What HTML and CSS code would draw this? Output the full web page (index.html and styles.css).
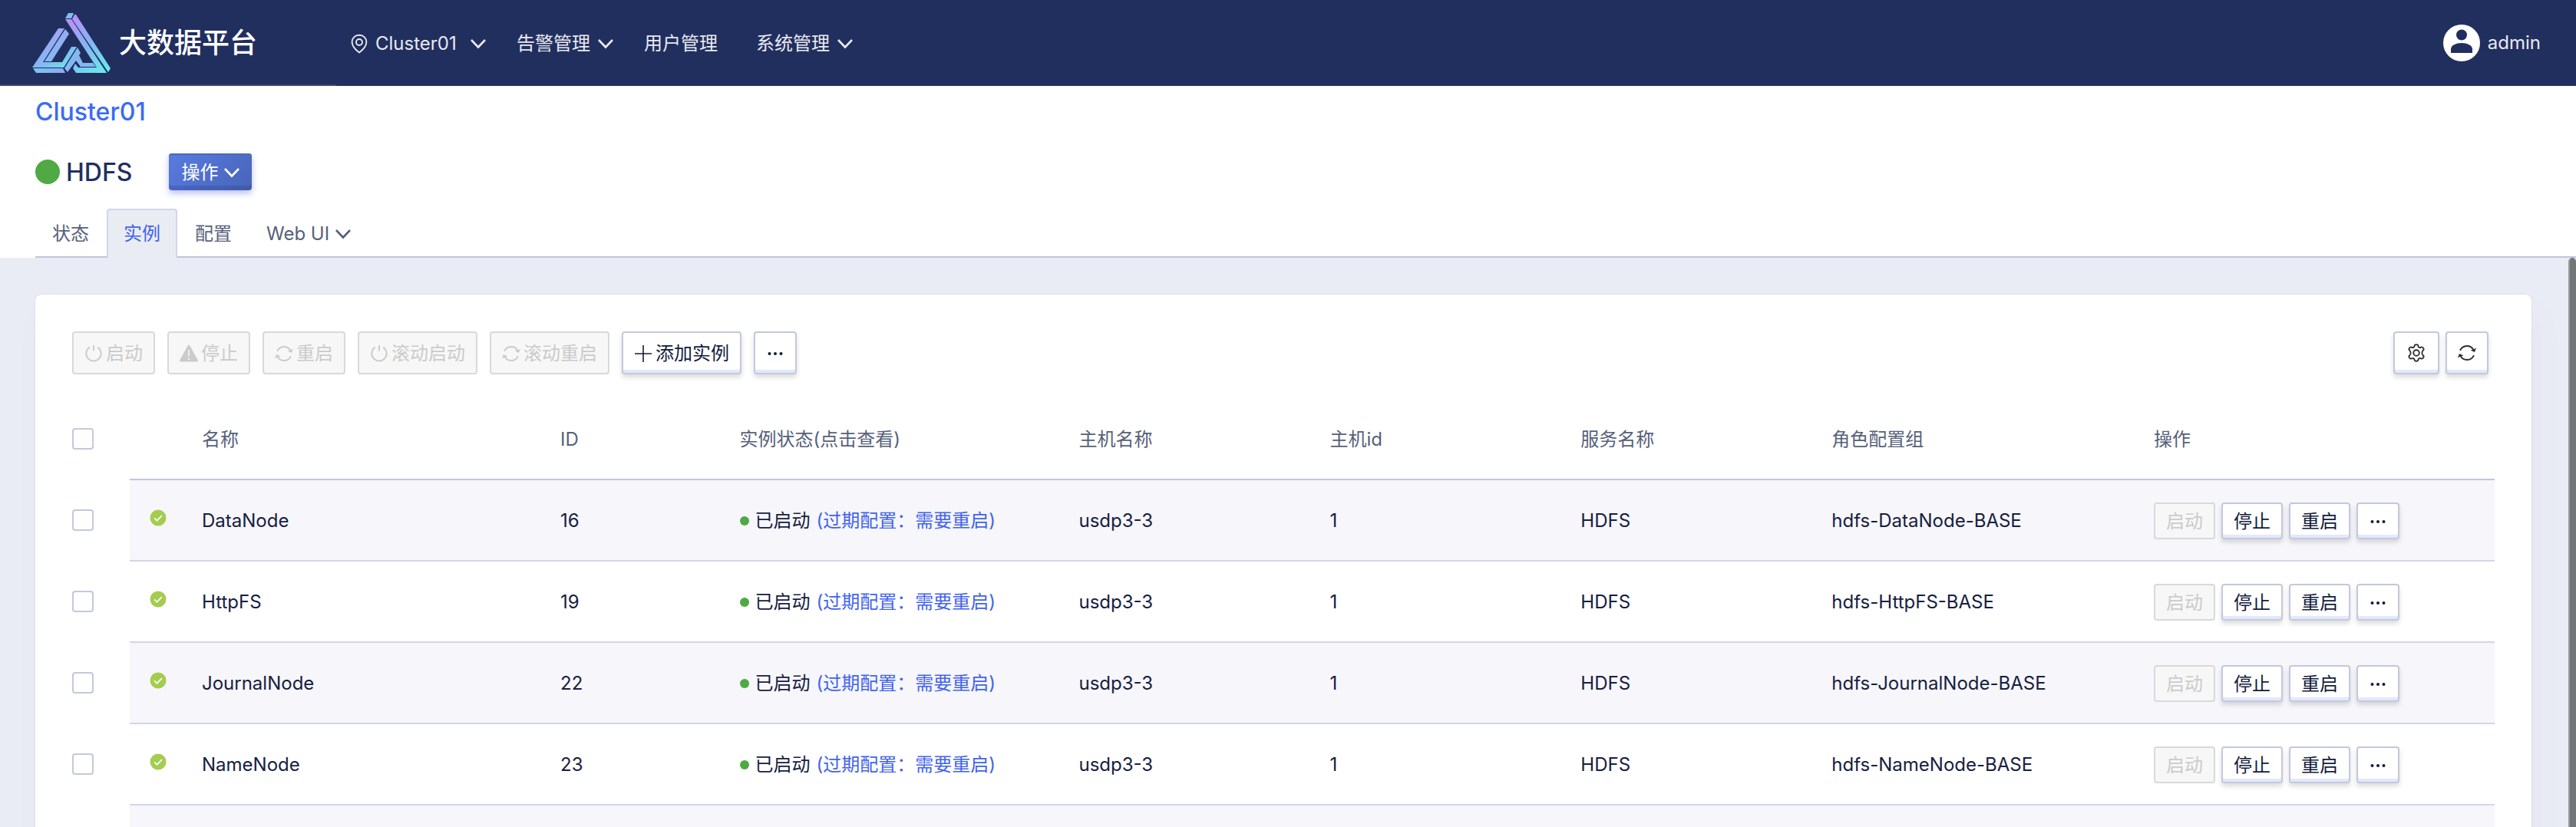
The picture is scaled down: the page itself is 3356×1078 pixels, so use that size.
FILE: index.html
```html
<!DOCTYPE html>
<html lang="zh-CN">
<head>
<meta charset="utf-8">
<title>大数据平台</title>
<link rel="stylesheet" href="styles.css">
</head>
<body>
<svg class="sprite" aria-hidden="true">
  <defs>
    <linearGradient id="brand-right" gradientUnits="userSpaceOnUse" x1="44" y1="4" x2="98" y2="78">
      <stop offset="0" stop-color="#c38af9"/><stop offset="0.5" stop-color="#86b4f3"/><stop offset="1" stop-color="#66eeea"/>
    </linearGradient>
    <linearGradient id="brand-left" gradientUnits="userSpaceOnUse" x1="24" y1="22" x2="52" y2="66">
      <stop offset="0" stop-color="#a4a4f6"/><stop offset="0.6" stop-color="#84b8f2"/><stop offset="1" stop-color="#6cdfec"/>
    </linearGradient>
    <linearGradient id="brand-base" gradientUnits="userSpaceOnUse" x1="0" y1="0" x2="44" y2="0">
      <stop offset="0" stop-color="#78c8ef"/><stop offset="1" stop-color="#8fa8f4"/>
    </linearGradient>
  </defs>
  <symbol id="chevron" viewBox="0 0 20 14"><path d="M1 2l9 9.500L19 2" fill="none" stroke="currentColor" stroke-width="2.600"/></symbol>
  <symbol id="power" viewBox="0 0 24 24"><path d="M6.800 3.600a9.700 9.700 0 1 0 10.400 0M12 1v7.500" fill="none" stroke="currentColor" stroke-width="1.900"/></symbol>
  <symbol id="warning" viewBox="0 0 24 24"><path fill-rule="evenodd" fill="currentColor" d="M10.700 1.500q1.300-1.900 2.600 0l10.400 18.700q.9 2.300-1.500 2.300H1.800q-2.400 0-1.500-2.300zM11.200 7h1.600v8.500h-1.600zM11 18h2v2h-2z"/></symbol>
  <symbol id="refresh" viewBox="0 0 24 24"><path d="M3 8.800A9.700 9.700 0 0 1 20.600 8.400M21 15.200A9.700 9.700 0 0 1 3.400 15.600" fill="none" stroke="currentColor" stroke-width="1.900"/><path fill="currentColor" d="M16.500 8.500l5.500 2.500 2-5.500-3 1.700zM7.500 15.500L2 13 0 18.500l3-1.700z"/></symbol>
  <symbol id="plus" viewBox="0 0 24 24"><path d="M12 1v22M1 12h22" fill="none" stroke="currentColor" stroke-width="1.600"/></symbol>
  <symbol id="pin" viewBox="0 0 22 26"><path d="M11 1.800c5.500 0 9.400 4 9.400 9 0 6-5.600 10.900-9.400 13.600C7.200 21.700 1.600 16.800 1.600 10.800c0-5 3.900-9 9.400-9z" fill="none" stroke="currentColor" stroke-width="1.900"/><circle cx="11" cy="11" r="4" fill="none" stroke="currentColor" stroke-width="1.900"/></symbol>
  <symbol id="gear" viewBox="0 0 24 24"><path d="M9.600 2.800q.2-1.600 2.400-1.600t2.400 1.600q.2 1.600 1.300 2.100t2.500-.3q1.700-.7 2.900 1.200t-.3 3q-1.400 1.200-1.400 3.200t1.400 3.200q1.500 1.100.3 3t-2.900 1.200q-1.400-.8-2.500-.3t-1.300 2.100q-.2 1.600-2.400 1.600t-2.400-1.600q-.2-1.600-1.300-2.100t-2.500.3q-1.700.7-2.900-1.200t.3-3q1.400-1.200 1.400-3.200T3.200 8.800q-1.500-1.100-.3-3t2.900-1.200q1.400.8 2.500.3t1.300-2.100z" fill="none" stroke="currentColor" stroke-width="1.800"/><circle cx="12" cy="12" r="3.800" fill="none" stroke="currentColor" stroke-width="1.900"/></symbol>
  <symbol id="ok" viewBox="0 0 22 22"><circle cx="11" cy="11" r="10.500" fill="#a4cd4f"/><path d="M6.200 11.300l3.300 3.500 6.300-6.700" fill="none" stroke="#fff" stroke-width="1.700"/></symbol>
  <symbol id="dots" viewBox="0 0 20 4"><circle cx="2.500" cy="2" r="2" fill="currentColor"/><circle cx="10" cy="2" r="2" fill="currentColor"/><circle cx="17.500" cy="2" r="2" fill="currentColor"/></symbol>
  <symbol id="person" viewBox="0 0 48 48"><circle cx="24" cy="24" r="24" fill="#fff"/><circle cx="24" cy="13.500" r="7" fill="#212f5f"/><path d="M10 37v-5c0-5 7-8 14-8s14 3 14 8v5z" fill="#212f5f"/></symbol>
</svg>

<header class="topbar">
  <a class="brand" href="#">
    <svg class="brand-logo" viewBox="0 0 102 78" aria-hidden="true">
      <path fill="#78c4ef" d="M47 0h7l-3 7h-8z"/>
      <path fill="url(#brand-right)" d="M43 8h8l46 70H57l-4-6 3-6 4 5h24zM55 2h2l45 70-3 5L52 8z"/>
      <path fill="#83b8f2" d="M66 65h13l4 5H62z"/>
      <path fill="url(#brand-left)" d="M34 20h8L14 64h25l12-20h7L41 71H0zM43 21l5 6-23 36h-9z"/>
      <path fill="url(#brand-base)" d="M1 72h39l3 6H5z"/>
      <path fill="#84b8f2" d="M59 45l4 7-2 3 5 10-3 5-6-8-11 15-4-5z"/>
    </svg>
    <span class="brand-name">大数据平台</span>
  </a>
  <nav class="menu">
    <a class="menu-item" href="#"><svg class="icon-pin"><use href="#pin"/></svg><span class="menu-text">Cluster01</span><svg class="icon-chevron"><use href="#chevron"/></svg></a>
    <a class="menu-item" href="#"><span class="menu-text">告警管理</span><svg class="icon-chevron"><use href="#chevron"/></svg></a>
    <a class="menu-item" href="#"><span class="menu-text">用户管理</span></a>
    <a class="menu-item" href="#"><span class="menu-text">系统管理</span><svg class="icon-chevron"><use href="#chevron"/></svg></a>
  </nav>
  <a class="user" href="#"><svg class="icon-avatar"><use href="#person"/></svg>admin</a>
</header>

<section class="service">
  <h1 class="cluster"><a href="#">Cluster01</a></h1>
  <div class="service-row">
    <span class="health"></span>
    <h2 class="service-name">HDFS</h2>
    <button class="btn-primary" type="button">操作<svg class="icon-chevron"><use href="#chevron"/></svg></button>
  </div>
  <nav class="tabs">
    <a class="tab" href="#">状态</a>
    <a class="tab tab-active" href="#">实例</a>
    <a class="tab" href="#">配置</a>
    <a class="tab" href="#">Web UI<svg class="icon-chevron"><use href="#chevron"/></svg></a>
  </nav>
</section>

<main class="content">
  <div class="scroll-thumb"></div>
  <div class="card">
    <div class="toolbar">
      <button class="btn" type="button" disabled><svg class="icon"><use href="#power"/></svg>启动</button>
      <button class="btn" type="button" disabled><svg class="icon"><use href="#warning"/></svg>停止</button>
      <button class="btn" type="button" disabled><svg class="icon"><use href="#refresh"/></svg>重启</button>
      <button class="btn" type="button" disabled><svg class="icon"><use href="#power"/></svg>滚动启动</button>
      <button class="btn" type="button" disabled><svg class="icon"><use href="#refresh"/></svg>滚动重启</button>
      <button class="btn" type="button"><svg class="icon"><use href="#plus"/></svg>添加实例</button>
      <button class="btn" type="button" aria-label="更多"><svg class="icon-dots"><use href="#dots"/></svg></button>
      <div class="toolbar-end">
        <button class="btn btn-settings" type="button" aria-label="设置"><svg class="icon"><use href="#gear"/></svg></button>
        <button class="btn" type="button" aria-label="刷新"><svg class="icon"><use href="#refresh"/></svg></button>
      </div>
    </div>

    <table class="instances">
      <colgroup>
        <col class="col-check"><col class="col-icon"><col class="col-name"><col class="col-id"><col class="col-status"><col class="col-host"><col class="col-host"><col class="col-host"><col class="col-group"><col>
      </colgroup>
      <thead>
        <tr><th><input class="check" type="checkbox" aria-label="全选"></th><th></th><th>名称</th><th>ID</th><th>实例状态(点击查看)</th><th>主机名称</th><th>主机id</th><th>服务名称</th><th>角色配置组</th><th>操作</th></tr>
      </thead>
      <tbody>
        <tr>
          <td><input class="check" type="checkbox" aria-label="DataNode"></td>
          <td class="cell-icon"><svg class="icon-ok"><use href="#ok"/></svg></td>
          <td>DataNode</td><td>16</td>
          <td><div class="status"><span class="dot"></span>已启动<a href="#">(过期配置：需要重启)</a></div></td>
          <td>usdp3-3</td><td>1</td><td>HDFS</td><td>hdfs-DataNode-BASE</td>
          <td><div class="actions"><button class="btn btn-small" type="button" disabled>启动</button><button class="btn btn-small" type="button">停止</button><button class="btn btn-small" type="button">重启</button><button class="btn btn-small" type="button" aria-label="更多"><svg class="icon-dots"><use href="#dots"/></svg></button></div></td>
        </tr>
        <tr>
          <td><input class="check" type="checkbox" aria-label="HttpFS"></td>
          <td class="cell-icon"><svg class="icon-ok"><use href="#ok"/></svg></td>
          <td>HttpFS</td><td>19</td>
          <td><div class="status"><span class="dot"></span>已启动<a href="#">(过期配置：需要重启)</a></div></td>
          <td>usdp3-3</td><td>1</td><td>HDFS</td><td>hdfs-HttpFS-BASE</td>
          <td><div class="actions"><button class="btn btn-small" type="button" disabled>启动</button><button class="btn btn-small" type="button">停止</button><button class="btn btn-small" type="button">重启</button><button class="btn btn-small" type="button" aria-label="更多"><svg class="icon-dots"><use href="#dots"/></svg></button></div></td>
        </tr>
        <tr>
          <td><input class="check" type="checkbox" aria-label="JournalNode"></td>
          <td class="cell-icon"><svg class="icon-ok"><use href="#ok"/></svg></td>
          <td>JournalNode</td><td>22</td>
          <td><div class="status"><span class="dot"></span>已启动<a href="#">(过期配置：需要重启)</a></div></td>
          <td>usdp3-3</td><td>1</td><td>HDFS</td><td>hdfs-JournalNode-BASE</td>
          <td><div class="actions"><button class="btn btn-small" type="button" disabled>启动</button><button class="btn btn-small" type="button">停止</button><button class="btn btn-small" type="button">重启</button><button class="btn btn-small" type="button" aria-label="更多"><svg class="icon-dots"><use href="#dots"/></svg></button></div></td>
        </tr>
        <tr>
          <td><input class="check" type="checkbox" aria-label="NameNode"></td>
          <td class="cell-icon"><svg class="icon-ok"><use href="#ok"/></svg></td>
          <td>NameNode</td><td>23</td>
          <td><div class="status"><span class="dot"></span>已启动<a href="#">(过期配置：需要重启)</a></div></td>
          <td>usdp3-3</td><td>1</td><td>HDFS</td><td>hdfs-NameNode-BASE</td>
          <td><div class="actions"><button class="btn btn-small" type="button" disabled>启动</button><button class="btn btn-small" type="button">停止</button><button class="btn btn-small" type="button">重启</button><button class="btn btn-small" type="button" aria-label="更多"><svg class="icon-dots"><use href="#dots"/></svg></button></div></td>
        </tr>
        <tr><td></td><td></td><td></td><td></td><td></td><td></td><td></td><td></td><td></td><td></td></tr>
      </tbody>
    </table>
  </div>
</main>
</body>
</html>
```
FILE: styles.css
```css
* { box-sizing: border-box; }

body {
  margin: 0;
  height: 100vh;
  display: flex;
  flex-direction: column;
  overflow: hidden;
  background: #fff;
  color: #16203f;
  font: 24px/36px Inter, "Noto Sans CJK SC", sans-serif;
}

a { color: inherit; text-decoration: none; }
h1, h2 { margin: 0; font-size: 32px; line-height: 48px; }
button { font: inherit; cursor: pointer; }
svg { display: block; flex: none; }

.sprite { position: absolute; width: 0; height: 0; }
.icon { width: 24px; height: 24px; }
.icon-pin { width: 22px; height: 26px; }
.icon-chevron { width: 20px; height: 14px; }
.icon-dots { width: 20px; height: 4px; }
.icon-ok { width: 22px; height: 22px; }
.icon-avatar { width: 48px; height: 48px; }

/* Top bar */
.topbar {
  flex: none;
  display: flex;
  align-items: stretch;
  height: 112px;
  padding-right: 46px;
  background: #212f5f;
  color: #e9eaef;
}
.brand {
  display: flex;
  align-items: center;
  gap: 11px;
  width: 438px;
  padding-left: 42px;
  box-shadow: inset 0 -2px 0 #3a4671;
}
.brand-logo { width: 102px; height: 78px; }
.brand-name { color: #fff; font-size: 36px; font-weight: 500; line-height: 54px; }
.menu {
  display: grid;
  grid-template-columns: 176px 126px 106px 126px;
  column-gap: 40px;
  align-items: center;
  padding: 2px 0 0 19px;
}
.menu-item { display: flex; align-items: center; gap: 10px; }
.menu-text { flex: 1; white-space: nowrap; }
.user { display: flex; align-items: center; gap: 10px; margin-left: auto; }

/* Service heading */
.service { flex: none; padding: 10px 0 0 46px; }
.cluster { font-weight: 500; color: #3b6af6; }
.service-row { display: flex; align-items: center; height: 48px; margin-top: 30px; }
.health { width: 32px; height: 32px; border-radius: 50%; background: #4fa944; }
.service-name { margin: 0 48px 0 8px; padding-top: 2px; font-weight: 500; color: #212f5f; }
.btn-primary {
  display: flex;
  align-items: center;
  gap: 8px;
  height: 48px;
  padding: 2px 16px 0;
  border: 0;
  border-radius: 4px;
  background: linear-gradient(135deg, #587be0, #4965b8);
  box-shadow: inset 0 2px 0 #4a68bd, inset 0 -6px 0 rgba(40, 60, 130, 0.25), 0 4px 8px rgba(80, 90, 220, 0.4);
  color: #fff;
}

.tabs {
  display: flex;
  gap: 1px;
  height: 64px;
  margin-top: 24px;
  box-shadow: inset 0 -2px 0 #c1c5da;
  color: #56617a;
}
.tab {
  display: flex;
  align-items: center;
  gap: 8px;
  padding: 0 20px;
  border: 2px solid transparent;
  border-bottom: 0;
  border-radius: 4px 4px 0 0;
}
.tab-active { border-color: #d2d5ea; background: #eaecf4; color: #4263ee; }

/* Content */
.content {
  position: relative;
  flex: 1;
  min-height: 0;
  overflow: hidden;
  padding: 48px 58px 48px 46px;
  background: #eaecf5;
}
.scroll-thumb {
  position: absolute;
  top: 0;
  right: 0;
  width: 10px;
  height: 100%;
  border-left: 2px solid #9b9c9f;
  border-top-left-radius: 6px;
  border-top-right-radius: 6px;
  background: #747679;
}
.card {
  padding: 48px;
  border-radius: 8px;
  background: #fff;
  box-shadow: 0 0 2px rgba(60, 70, 120, 0.2), 8px 24px 40px rgba(60, 80, 140, 0.04);
}

.toolbar { display: flex; gap: 16px; margin-bottom: 32px; }
.toolbar-end { display: flex; gap: 8px; margin: 0 8px 0 auto; }
.btn {
  display: flex;
  align-items: center;
  justify-content: center;
  gap: 4px;
  height: 56px;
  min-width: 56px;
  padding: 2px 14px 0;
  border: 2px solid #c3c9dc;
  border-radius: 4px;
  background: #fff;
  box-shadow: inset 0 -4px 0 #e2e8fc, 0 4px 6px rgba(0, 0, 0, 0.14);
  color: #131c3b;
  white-space: nowrap;
}
.btn:disabled { border-color: #d9d9d9; background: #f7f7f7; box-shadow: none; color: #cbcbcb; }
.btn-small { height: 48px; }
.btn-settings { width: 60px; }
.toolbar-end .btn { padding-top: 0; color: #2d2d30; }

.instances { width: 100%; table-layout: fixed; border-collapse: separate; border-spacing: 0; }
.col-check { width: 75px; }
.col-icon { width: 94px; }
.col-name { width: 14.8%; }
.col-id { width: 7.4%; }
.col-status { width: 14%; }
.col-host { width: 10.36%; }
.col-group { width: 13.3%; }
.instances th, .instances td {
  height: 106px;
  padding: 2px 0 0;
  border-bottom: 2px solid #d2d5ea;
  text-align: left;
  vertical-align: middle;
  font-weight: 400;
}
.instances th { border-bottom-color: #c2c7da; color: #56617a; }
.instances tbody tr:nth-child(odd) td { background: #f6f6fb; }
.instances tbody tr td:first-child, .instances th:first-child {
  padding-top: 0;
  border-bottom-color: transparent;
  background: #fff;
}
.instances .cell-icon { padding: 0 0 6px 26px; }
.check {
  display: block;
  appearance: none;
  width: 28px;
  height: 28px;
  margin: 0;
  border: 2px solid #c3c9dc;
  border-radius: 4px;
  background: #fff;
}
.status { display: flex; align-items: center; white-space: nowrap; }
.status a { margin-left: 8px; color: #4263ee; }
.dot { width: 12px; height: 12px; margin-right: 8px; border-radius: 50%; background: #4fa944; }
.actions { display: flex; gap: 8px; }
```
